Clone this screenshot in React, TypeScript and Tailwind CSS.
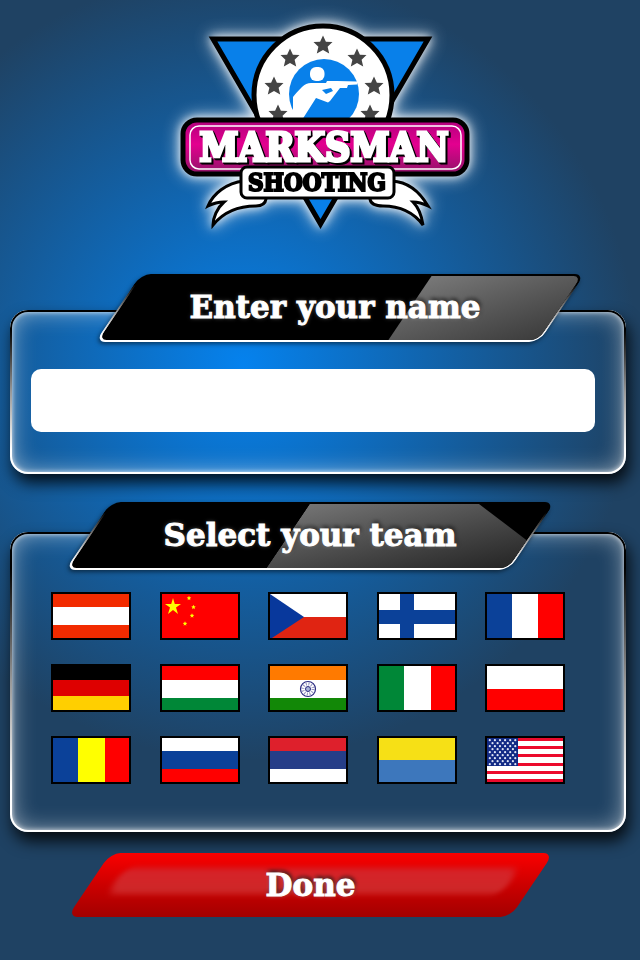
import React, { useState } from "react";

const STARS: [number, number][] = [
  [323, 45],
  [290, 58],
  [357, 58],
  [274, 86],
  [374, 86],
  [278, 114],
  [370, 114],
];

const STAR_PATH =
  "M0 -9.500 L2.900 -3.300 L9.500 -3 L4.600 1.700 L6.200 8.500 L0 5 L-6.200 8.500 L-4.600 1.700 L-9.500 -3 L-2.900 -3.300 Z";

function Logo() {
  return (
    <svg
      viewBox="165 8 310 232"
      width="310"
      height="232"
      role="img"
      aria-label="Marksman Shooting"
      className="overflow-visible [filter:drop-shadow(0_0_4px_rgba(255,255,255,0.8))_drop-shadow(0_0_8px_rgba(255,255,255,0.7))]"
    >
      <defs>
        <linearGradient id="pink" x1="0" y1="0" x2="0" y2="1">
          <stop offset="0" stopColor="#b0007c" />
          <stop offset="0.45" stopColor="#e3008f" />
          <stop offset="1" stopColor="#8f1468" />
        </linearGradient>
      </defs>
      <path d="M213 39 L428 39 L320.500 224 Z" fill="#0880ea" stroke="#000" strokeWidth="5" strokeMiterlimit="10" />
      <circle cx="323" cy="95" r="69" fill="#fff" stroke="#000" strokeWidth="5" />
      {STARS.map(([x, y]) => (
        <path key={`${x}-${y}`} d={STAR_PATH} transform={`translate(${x} ${y})`} fill="#444" />
      ))}
      <circle cx="324" cy="94" r="35" fill="#0880ea" />
      <rect x="310" y="67" width="14.500" height="14" rx="6" fill="#fff" />
      <path
        d="M293 120 L293 97 Q296 93 302 87 Q306 83 311 83 L326 83 L327 81 L337 81 L357 81.500 L357 84.500 L348 85 L347 88 L340 88 L330 101 L328 102.500 L316 98 L302 120 Z"
        fill="#fff"
      />
      <path d="M322 90 L331 88 L333 91 L326 94 Z" fill="#0880ea" />
      <g fill="#fff" stroke="#000" strokeWidth="3" strokeLinejoin="miter">
        <path d="M244 181 C226 183 213 194 208 206 C214 203 219 202 224 202 C217 208 213 218 213 225 C226 209 242 206 256 206 Q265 206 266 199 L262 190 Z" />
        <path d="M392 181 C410 182 421 194 428 206 C422 203 417 202 413 202 C419 208 422 218 423 225 C411 209 396 206 383 206 Q371 206 370 199 L374 190 Z" />
      </g>
      <rect x="183" y="120" width="284" height="54" rx="14" fill="url(#pink)" stroke="#000" strokeWidth="5" />
      <rect x="190" y="126" width="271" height="43" rx="9" fill="none" stroke="#fff" strokeWidth="1.500" />
      <g
        fontFamily="'DejaVu Serif Condensed','DejaVu Serif',serif"
        fontStretch="condensed"
        fontWeight="700"
        textAnchor="middle"
      >
        <text
          x="324"
          y="161"
          fontSize="39"
          fill="#fff"
          stroke="#fff"
          strokeWidth="3"
          className="[filter:drop-shadow(1px_1px_0_#000)_drop-shadow(1px_1px_0_#000)]"
        >
          MARKSMAN
        </text>
        <rect x="241" y="167" width="153" height="31" rx="6" fill="#fff" stroke="#000" strokeWidth="3" />
        <text x="317" y="191" fontSize="24" fill="#000" stroke="#000" strokeWidth="2">
          SHOOTING
        </text>
      </g>
    </svg>
  );
}

function HeadingPlate({ children, variant }: { children: React.ReactNode; variant: "name" | "team" }) {
  return (
    <div className="relative z-10 flex h-[68px] items-center justify-center pb-0.5">
      <div className="absolute inset-0 -skew-x-[34deg] overflow-hidden rounded-[10px] border-2 border-transparent shadow-[0_2px_4px_rgba(0,0,0,0.5)] [background:linear-gradient(#000,#000)_padding-box,linear-gradient(#000_15%,#aaa_60%,#fff_90%)_border-box]">
        {variant === "name" ? (
          <div className="absolute inset-y-0 right-0 w-[34%] bg-linear-to-br from-[#787878] to-[#3c3c3c]" />
        ) : (
          <div className="absolute inset-y-0 right-0 w-[55%] bg-linear-to-br from-[#747474] to-[#262626] [clip-path:polygon(0_0,70%_0,100%_57%,100%_100%,0_100%)]" />
        )}
      </div>
      {children}
    </div>
  );
}

const LABEL =
  "relative font-['DejaVu_Serif',serif] text-[31px] leading-[40px] font-bold whitespace-nowrap text-white [-webkit-text-stroke:1px_#fff] [text-shadow:0_0_4px_rgba(255,255,255,0.35),1px_-2px_4px_#000]";

function Panel({ children, className }: { children: React.ReactNode; className: string }) {
  return (
    <div
      className={`relative rounded-[18px] shadow-[3px_9px_16px_rgba(0,0,0,0.85),inset_0_0_5px_2px_rgba(255,255,255,0.75),inset_0_0_24px_rgba(255,255,255,0.6)] before:pointer-events-none before:absolute before:inset-0 before:rounded-[18px] before:p-[2px] before:content-[''] before:[background:linear-gradient(#000_12%,#999_50%,#fff_85%)] before:[mask:linear-gradient(#000_0_0)_content-box_exclude,linear-gradient(#000_0_0)] ${className}`}
    >
      {children}
    </div>
  );
}

const horizontal = (parts: [string, number][]) => {
  let y = 0;
  return parts.map(([c, h], i) => {
    const r = <rect key={i} x="0" y={y} width="76" height={h} fill={c} />;
    y += h;
    return r;
  });
};
const vertical = (parts: [string, number][]) => {
  let x = 0;
  return parts.map(([c, w], i) => {
    const r = <rect key={i} x={x} y="0" width={w} height="44" fill={c} />;
    x += w;
    return r;
  });
};

const FLAGS: { name: string; art: React.ReactNode }[] = [
  { name: "Austria", art: horizontal([["#f22b00", 13], ["#fff", 18], ["#f22b00", 13]]) },
  {
    name: "China",
    art: (
      <>
        <rect width="76" height="44" fill="#f00" />
        <path d="M11 4 L12.800 10 L19 10 L14 13.600 L16 20 L11 16 L6 20 L8 13.600 L3 10 L9.200 10 Z" fill="#ff0" />
        {[[27, 4], [31.5, 13], [30, 21.5], [23, 29.5]].map(([x, y]) => (
          <path
            key={y}
            d="M0 -2.200 L.7 -.7 L2.200 -.5 L1 .7 L1.400 2.200 L0 1.200 L-1.400 2.200 L-1 .7 L-2.200 -.5 L-.7 -.7 Z"
            transform={`translate(${x} ${y})`}
            fill="#ff0"
          />
        ))}
      </>
    ),
  },
  {
    name: "Czech Republic",
    art: (
      <>
        {horizontal([["#fff", 23], ["#e02412", 21]])}
        <path d="M0 0 L34 23 L2 44 L0 44 Z" fill="#08389c" />
      </>
    ),
  },
  {
    name: "Finland",
    art: (
      <>
        <rect width="76" height="44" fill="#fff" />
        <rect x="21" width="14" height="44" fill="#0b4199" />
        <rect y="16" width="76" height="14" fill="#0b4199" />
      </>
    ),
  },
  { name: "France", art: vertical([["#0b4199", 25], ["#fff", 26], ["#f00", 25]]) },
  { name: "Germany", art: horizontal([["#000", 14], ["#de0000", 16], ["#ffcf00", 14]]) },
  { name: "Hungary", art: horizontal([["#f00", 14], ["#fff", 18], ["#008737", 12]]) },
  {
    name: "India",
    art: (
      <>
        {horizontal([["#ff7a00", 14], ["#fff", 18], ["#128807", 12]])}
        <g fill="none" stroke="#2a2a80">
          <circle cx="38" cy="23" r="7.500" strokeWidth="1.200" />
          <circle cx="38" cy="23" r="5" strokeWidth="3" strokeDasharray="1 1.600" opacity=".5" />
          <circle cx="38" cy="23" r="2.500" strokeWidth="1" fill="#a9b4d8" />
        </g>
      </>
    ),
  },
  { name: "Italy", art: vertical([["#008737", 25], ["#fff", 27], ["#f00", 24]]) },
  { name: "Poland", art: horizontal([["#fff", 23], ["#f00", 21]]) },
  { name: "Romania", art: vertical([["#0b4199", 25], ["#ff0", 27], ["#f00", 24]]) },
  { name: "Russia", art: horizontal([["#fff", 13], ["#0b4199", 18], ["#f00", 13]]) },
  { name: "Serbia", art: horizontal([["#de202c", 13], ["#263e88", 18], ["#fff", 13]]) },
  { name: "Ukraine", art: horizontal([["#f6e016", 22], ["#3d77bc", 22]]) },
  {
    name: "United States",
    art: (
      <>
        <rect width="76" height="44" fill="#fff" />
        {[0, 8, 16, 25, 33, 41].map((y) => (
          <rect key={y} y={y} width="76" height="3" fill="#ec0a2c" />
        ))}
        <rect width="31" height="28" fill="#122a85" />
        {Array.from({ length: 9 }, (_, row) =>
          Array.from({ length: row % 2 ? 5 : 6 }, (_, col) => (
            <circle
              key={`${row}-${col}`}
              cx={(row % 2 ? 5.5 : 2.8) + col * 5.1}
              cy={2.2 + row * 3}
              r="1.100"
              fill="#dfe5f5"
            />
          ))
        )}
      </>
    ),
  },
];

export default function App() {
  const [name, setName] = useState("");
  const [team, setTeam] = useState("");
  return (
    <main className="min-h-screen overflow-hidden bg-[radial-gradient(circle_395px_at_38%_365px,#0582ee_0%,#1f4263_100%)] pt-2 pb-10">
      <header className="flex justify-center">
        <h1>
          <Logo />
        </h1>
      </header>
      <form onSubmit={(e) => e.preventDefault()} className="pr-3.5 pl-2.5">
        <section className="mt-[34px]">
          <div className="mr-16 ml-[108px]">
            <HeadingPlate variant="name">
              <label htmlFor="player" className={`${LABEL} mr-2.5`}>
                Enter your name
              </label>
            </HeadingPlate>
          </div>
          <Panel className="-mt-8 pt-[59px] pr-[31px] pb-[42px] pl-[21px]">
            <input
              id="player"
              type="text"
              value={name}
              onChange={(e) => setName(e.target.value)}
              className="block h-[63px] w-full rounded-[10px] bg-white px-4 font-['DejaVu_Serif',serif] text-[31px] text-black outline-none"
            />
          </Panel>
        </section>
        <section className="mt-7">
          <div className="mr-[94px] ml-[78px]">
            <HeadingPlate variant="team">
              <h2 className={LABEL}>Select your team</h2>
            </HeadingPlate>
          </div>
          <Panel className="-mt-[38px] pt-[60px] pr-[61px] pb-12 pl-[41px]">
            <div className="grid grid-cols-[repeat(5,80px)] justify-between gap-y-6">
              {FLAGS.map((f) => (
                <button
                  key={f.name}
                  type="button"
                  aria-label={f.name}
                  aria-pressed={team === f.name}
                  onClick={() => setTeam(f.name)}
                  className="h-12 w-20 border-2 border-black"
                >
                  <svg viewBox="0 0 76 44" className="block h-full w-full" aria-hidden="true">
                    {f.art}
                  </svg>
                </button>
              ))}
            </div>
          </Panel>
        </section>
        <div className="mt-[21px] mr-[94px] ml-[79px]">
          <button type="submit" className="relative flex h-16 w-full items-center justify-center">
            <span className="absolute inset-0 -skew-x-[34deg] overflow-hidden rounded-[10px] bg-linear-to-b from-[#fb0000] via-[#cc0000] to-[#a30000]">
              <span className="absolute top-[15px] right-[24px] bottom-[23px] left-[24px] rounded-[10px] bg-linear-to-b from-[#d82228] to-[#cc2828] blur-[3px]" />
            </span>
            <span className={LABEL}>Done</span>
          </button>
        </div>
      </form>
    </main>
  );
}
